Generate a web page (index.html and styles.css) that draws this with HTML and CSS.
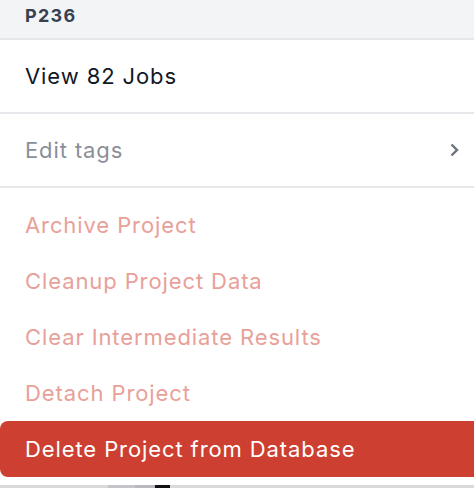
FILE: index.html
```html
<!DOCTYPE html>
<html lang="en">
<head>
    <meta charset="UTF-8">
    <meta name="viewport" content="width=device-width, initial-scale=1.0">
    <title>Project menu</title>
    <link rel="stylesheet" href="styles.css">
</head>
<body>
<div class="menu">
    <div class="menu-header">P236</div>
    <div class="menu-section">
        <div class="menu-item">View 82 Jobs</div>
    </div>
    <div class="menu-section">
        <div class="menu-item muted">
            <span>Edit tags</span>
            <svg class="chevron" width="12" height="16" viewBox="0 0 12 16">
                <path d="M2.5 2.5 L8 8 L2.5 13.5" fill="none" stroke="currentColor" stroke-width="2.4"/>
            </svg>
        </div>
    </div>
    <div class="menu-section last">
        <div class="menu-item danger">Archive Project</div>
        <div class="menu-item danger">Cleanup Project Data</div>
        <div class="menu-item danger">Clear Intermediate Results</div>
        <div class="menu-item danger">Detach Project</div>
        <div class="menu-item danger active">Delete Project from Database</div>
    </div>
</div>
<div class="under">
    <div class="under-a"></div>
    <div class="under-b"></div>
    <div class="under-c"></div>
    <div class="under-d"></div>
</div>
</body>
</html>
```

FILE: styles.css
```css
* {
    margin: 0;
    padding: 0;
    box-sizing: border-box;
}

body {
    font-family: Inter, "Noto Sans", sans-serif;
    background: #fff;
    overflow: hidden;
    height: 488px;
}

.menu {
    background: #fff;
}

.menu-header {
    height: 38px;
    padding: 0 25px;
    display: flex;
    align-items: center;
    padding-bottom: 7px;
    background: #f3f4f6;
    color: #374151;
    font-size: 18px;
    font-weight: 700;
    letter-spacing: 1.3px;
}

.menu-section {
    border-top: 2px solid #e5e7eb;
    padding: 8px 0;
}

.menu-section.last {
    padding-top: 9px;
}

.menu-item {
    height: 56px;
    padding: 0 25px;
    display: flex;
    align-items: center;
    justify-content: space-between;
    font-size: 22px;
    letter-spacing: 0.9px;
    color: #111827;
}

.menu-item.muted {
    color: #8b8f97;
}

.chevron {
    color: #6b7280;
    margin-right: -12px;
}

.menu-item.danger {
    color: #e9a099;
}

.menu-item.active {
    background: #cd3f30;
    color: #fff;
    border-radius: 8px 0 0 8px;
}

.under {
    display: flex;
    height: 4px;
    background: #d9dadc;
}

.under-a {
    width: 108px;
}

.under-b {
    width: 27px;
    background: #c4c5c8;
}

.under-c {
    width: 20px;
    background: #b9babd;
}

.under-d {
    width: 15px;
    background: #111;
}
```
